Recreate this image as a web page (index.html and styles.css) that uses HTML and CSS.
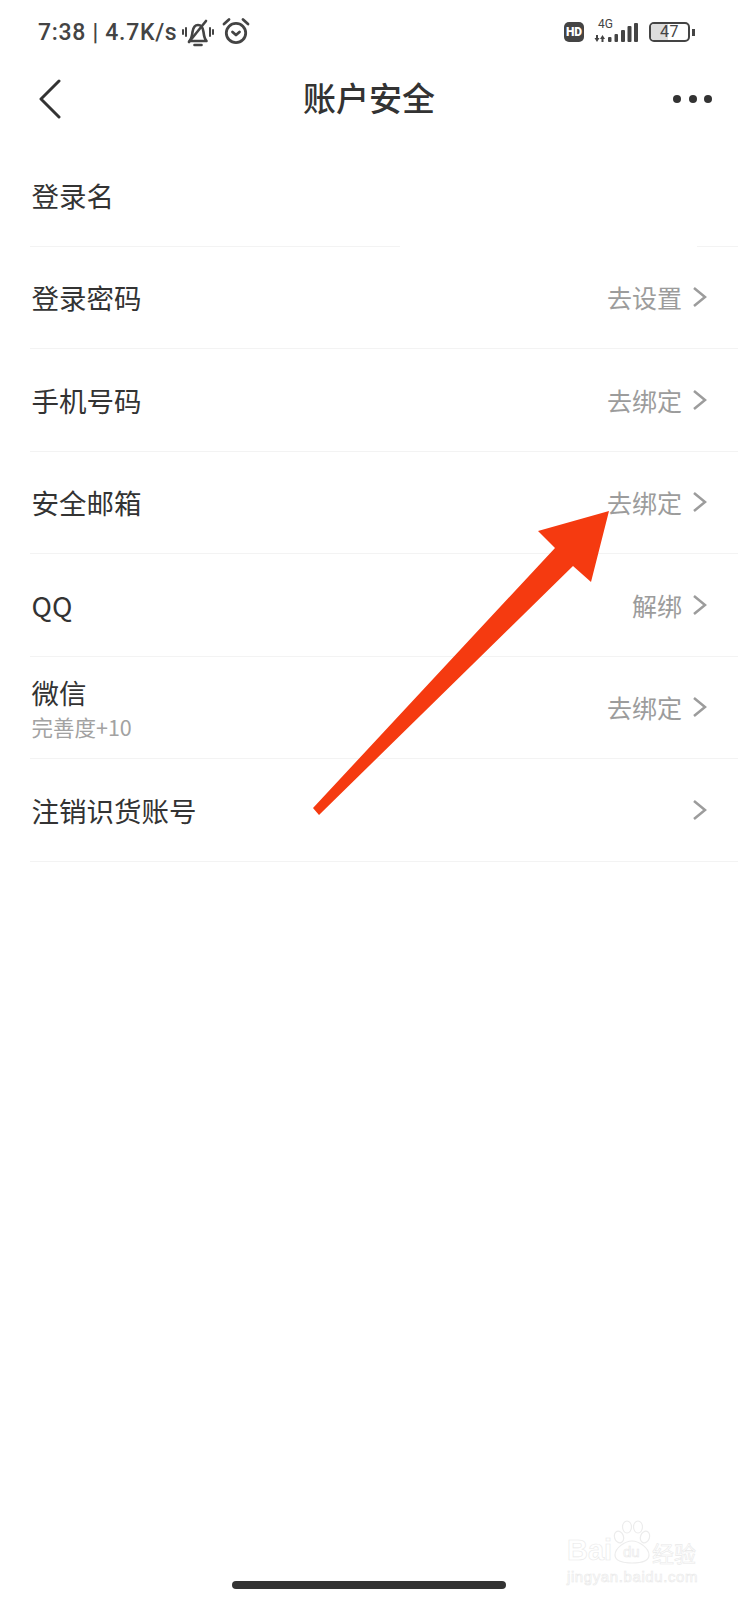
FILE: index.html
```html
<!DOCTYPE html>
<html lang="zh-CN">
  <head>
    <meta charset="UTF-8" />
    <meta name="viewport" content="width=device-width, initial-scale=1.0" />
    <title>账户安全</title>
    <link rel="stylesheet" href="styles.css">
  </head>
  <body>
    <div class="status-bar">
      <div class="status-left">
        <span class="status-text">7:38 | 4.7K/s</span>
        <!-- muted bell -->
        <svg class="icon-bell" width="32" height="30" viewBox="0 0 32 30" fill="none" stroke="#444" stroke-width="2.600" stroke-linecap="round" stroke-linejoin="round">
          <path d="M7.500 24c2-2 2.500-5 3-9 .6-4 2.500-7 5.500-7s5 3 5.500 7c.5 4 1 7 3 9z" />
          <path d="M12.500 28h7" />
          <path d="M24 4 7 25" />
          <path d="M1 13v4M4 11v8M28 11v8M31 13v4" stroke-width="2" />
        </svg>
        <!-- alarm clock -->
        <svg class="icon-alarm" width="28" height="28" viewBox="0 0 28 28" fill="none" stroke="#444" stroke-width="2.800" stroke-linecap="round" stroke-linejoin="round">
          <circle cx="14" cy="16" r="9.700" />
          <path d="M2 7l5-4.500M26 7l-5-4.500" />
          <path d="M10.500 15l3.500 3 3.500-3" />
        </svg>
      </div>
      <div class="status-right">
        <span class="hd-badge">HD</span>
        <div class="signal">
          <span class="signal-label">4G</span>
          <svg width="46" height="20" viewBox="0 0 46 20" fill="#444">
            <path d="M4 13h2v3h1.500L5 20l-2.500-4H4zM10.500 13l2.500 4h-1.500v3h-2v-3H8z" />
            <rect x="16" y="15" width="3.500" height="5" rx="1" />
            <rect x="22.500" y="12" width="3.500" height="8" rx="1" />
            <rect x="29" y="8" width="4" height="12" rx="1" />
            <rect x="35.500" y="4" width="4" height="16" rx="1" />
            <rect x="42" y="1" width="4" height="19" rx="1" />
          </svg>
        </div>
        <div class="battery">
          <div class="battery-body">
            <div class="battery-level"></div>
            <span class="battery-text">47</span>
          </div>
          <div class="battery-tip"></div>
        </div>
      </div>
    </div>

    <div class="nav-bar">
      <svg class="nav-back" width="22" height="40" viewBox="0 0 22 40" fill="none" stroke="#333" stroke-width="3" stroke-linecap="round" stroke-linejoin="round">
        <path d="M20 2 2 20l18 18" />
      </svg>
      <h1 class="nav-title">账户安全</h1>
      <div class="nav-more">
        <span class="dot"></span>
        <span class="dot"></span>
        <span class="dot"></span>
      </div>
    </div>

    <ul class="settings-list">
      <li class="row row-login"><span class="row-name">登录名</span></li>
      <li class="row">
        <span class="row-name">登录密码</span>
        <span class="row-action">去设置</span>
        <svg class="chevron" width="16" height="22" viewBox="0 0 16 22"><path d="M2 2l11 9-11 9" /></svg>
      </li>
      <li class="row">
        <span class="row-name">手机号码</span>
        <span class="row-action">去绑定</span>
        <svg class="chevron" width="16" height="22" viewBox="0 0 16 22"><path d="M2 2l11 9-11 9" /></svg>
      </li>
      <li class="row">
        <span class="row-name">安全邮箱</span>
        <span class="row-action">去绑定</span>
        <svg class="chevron" width="16" height="22" viewBox="0 0 16 22"><path d="M2 2l11 9-11 9" /></svg>
      </li>
      <li class="row">
        <span class="row-name">QQ</span>
        <span class="row-action">解绑</span>
        <svg class="chevron" width="16" height="22" viewBox="0 0 16 22"><path d="M2 2l11 9-11 9" /></svg>
      </li>
      <li class="row">
        <div class="row-stack">
          <span class="row-name">微信</span>
          <span class="row-sub">完善度+10</span>
        </div>
        <span class="row-action">去绑定</span>
        <svg class="chevron" width="16" height="22" viewBox="0 0 16 22"><path d="M2 2l11 9-11 9" /></svg>
      </li>
      <li class="row">
        <span class="row-name">注销识货账号</span>
        <svg class="chevron" width="16" height="22" viewBox="0 0 16 22"><path d="M2 2l11 9-11 9" /></svg>
      </li>
    </ul>

    <!-- red arrow laid over the list -->
    <svg class="callout-arrow" width="300" height="310" viewBox="0 0 300 310">
      <path d="M1 302 243 42 226 25 297 5 279 76 261 60 7 309z" fill="#f53a10" />
    </svg>

    <div class="watermark">
      <span class="watermark-bai">Bai</span>
      <svg class="watermark-paw" width="38" height="44" viewBox="0 0 38 44" fill="none" stroke="#ececec" stroke-width="1.200">
        <ellipse cx="6" cy="17" rx="4.500" ry="6" transform="rotate(-20 6 17)" />
        <ellipse cx="14" cy="7" rx="4.500" ry="6" />
        <ellipse cx="25" cy="7" rx="4.500" ry="6" />
        <ellipse cx="32" cy="17" rx="4.500" ry="6" transform="rotate(20 32 17)" />
        <path d="M2 35c0-7 10-14 17-14s17 7 17 14c0 6-8 8-17 8S2 41 2 35z" />
      </svg>
      <span class="watermark-du">du</span>
      <span class="watermark-cn">经验</span>
      <span class="watermark-url">jingyan.baidu.com</span>
    </div>

    <div class="home-bar"></div>
  </body>
</html>
```

FILE: styles.css
```css
* {
  box-sizing: border-box;
}

body {
  position: relative;
  margin: 0;
  height: 1600px;
  overflow: hidden;
  background-color: #fff;
  color: #333;
  font-family: "Noto Sans CJK SC", Roboto, sans-serif;
}

.status-bar {
  display: flex;
  justify-content: space-between;
  align-items: center;
  height: 64px;
  padding: 0 43px 0 38px;
}

.status-left {
  display: flex;
  align-items: center;
}

.status-text {
  font-family: Roboto, sans-serif;
  font-size: 23px;
  font-weight: 500;
  letter-spacing: 0.700px;
  color: #444;
}

.icon-bell {
  margin-left: 5px;
}

.icon-alarm {
  margin-left: 8px;
  margin-top: -2px;
}

.status-right {
  display: flex;
  align-items: center;
}

.hd-badge {
  width: 20px;
  height: 20px;
  border-radius: 5px;
  background-color: #444;
  color: #fff;
  font-family: Roboto, sans-serif;
  font-size: 12px;
  font-weight: 900;
  line-height: 20px;
  text-align: center;
}

.signal {
  position: relative;
  display: flex;
  margin-left: 8px;
}

.signal-label {
  position: absolute;
  left: 6px;
  top: -4px;
  font-family: Roboto, sans-serif;
  font-size: 12px;
  line-height: 12px;
  color: #444;
}

.battery {
  display: flex;
  align-items: center;
  margin-left: 11px;
}

.battery-body {
  position: relative;
  width: 41px;
  height: 20px;
  border: 2px solid #444;
  border-radius: 5px;
  overflow: hidden;
}

.battery-level {
  width: 47%;
  height: 100%;
  background-color: #ddd;
}

.battery-text {
  position: absolute;
  inset: 0;
  font-family: Roboto, sans-serif;
  font-size: 16px;
  line-height: 16px;
  letter-spacing: 0.500px;
  text-align: center;
  color: #444;
}

.battery-tip {
  width: 3px;
  height: 7px;
  margin-left: 2px;
  background-color: #444;
}

.nav-bar {
  position: relative;
  display: flex;
  justify-content: space-between;
  align-items: center;
  height: 70px;
  padding: 0 26px 0 39px;
}

.nav-title {
  position: absolute;
  left: 0;
  right: 0;
  top: 11px;
  margin: 0;
  font-size: 33px;
  font-weight: 500;
  line-height: 44px;
  text-align: center;
  color: #333;
}

.nav-more {
  display: flex;
  gap: 7.500px;
}

.dot {
  width: 8px;
  height: 8px;
  border-radius: 50%;
  background-color: #333;
}

.settings-list {
  list-style: none;
  margin: 10px 0 0 30px;
  padding: 0;
}

.row {
  display: flex;
  align-items: center;
  height: 102.500px;
  padding-right: 30px;
  border-bottom: 1px solid #f3f3f3;
}

.row-login {
  border-bottom-color: transparent;
  background: linear-gradient(90deg, #f3f3f3 370px, transparent 370px, transparent 667px, #f3f3f3 667px) left bottom / 100% 1px no-repeat;
  background-origin: border-box;
  background-clip: border-box;
}

.row-name {
  margin-right: auto;
  padding-left: 1.500px;
  font-size: 27.500px;
  line-height: 38px;
  color: #333;
}

.row-stack {
  display: flex;
  flex-direction: column;
  margin-right: auto;
}

.row-sub {
  padding: 1px 0 0 1.500px;
  font-size: 21.500px;
  line-height: 30px;
  color: #a2a2a2;
}

.row-action {
  font-size: 25px;
  color: #9c9c9c;
}

.chevron {
  margin-left: 10px;
  fill: none;
  stroke: #9c9c9c;
  stroke-width: 2.500;
}

.callout-arrow {
  position: absolute;
  left: 312px;
  top: 506px;
}

.watermark {
  position: absolute;
  left: 567px;
  top: 1520px;
  display: grid;
  grid-template-columns: 46px 39px 45px;
  color: transparent;
  -webkit-text-stroke: 0.600px #e9e9e9;
  font-family: "Liberation Sans", sans-serif;
}

.watermark-bai {
  align-self: end;
  font-size: 29px;
  font-weight: 700;
  line-height: 28px;
}

.watermark-paw {
  grid-column: 2;
  grid-row: 1;
}

.watermark-du {
  grid-column: 2;
  grid-row: 1;
  align-self: end;
  padding: 0 0 4px 10px;
  font-size: 15px;
  line-height: 16px;
}

.watermark-cn {
  align-self: end;
  font-family: "Noto Sans CJK SC", sans-serif;
  font-size: 22px;
  line-height: 24px;
}

.watermark-url {
  grid-column: 1 / 4;
  margin-top: 5px;
  font-size: 15px;
  line-height: 16px;
  letter-spacing: 0.600px;
}

.home-bar {
  position: absolute;
  left: 232px;
  top: 1581px;
  width: 274px;
  height: 8px;
  border-radius: 4px;
  background-color: #333;
}
```
